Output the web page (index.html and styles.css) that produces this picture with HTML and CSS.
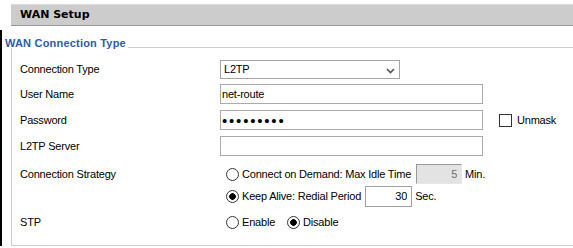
FILE: index.html
```html
<!DOCTYPE html>
<html lang="en">
<head>
    <meta charset="UTF-8">
    <title>WAN Setup</title>
    <link rel="stylesheet" href="styles.css">
</head>
<body>
    <div class="page-title">WAN Setup</div>
    <div class="frame">
        <div class="group">
            <div class="group-title"><span>WAN Connection Type</span></div>
            <div class="group-body">
                <div class="row row-first">
                    <label class="field-label" for="conn-type">Connection Type</label>
                    <div class="select-wrap">
                        <select class="select" id="conn-type">
                            <option>L2TP</option>
                        </select>
                        <svg class="chevron" width="9" height="6" viewBox="0 0 9 6">
                            <path d="M1 1 L4.5 4.5 L8 1" fill="none" stroke="#555" stroke-width="1.7"/>
                        </svg>
                    </div>
                </div>
                <div class="row">
                    <label class="field-label" for="user">User Name</label>
                    <input class="text-input" type="text" id="user" value="net-route">
                </div>
                <div class="row">
                    <label class="field-label" for="pass">Password</label>
                    <input class="text-input password" type="password" id="pass" value="123456789">
                    <label class="check">
                        <input class="checkbox" type="checkbox">
                        <span>Unmask</span>
                    </label>
                </div>
                <div class="row">
                    <label class="field-label" for="server">L2TP Server</label>
                    <input class="text-input" type="text" id="server" autofocus>
                </div>
                <div class="row row-strategy">
                    <div class="field-label">Connection Strategy</div>
                    <div class="options">
                        <label class="option">
                            <input class="radio" type="radio" name="strategy">
                            <span>Connect on Demand: Max Idle Time</span>
                            <input class="num-input idle" type="text" value="5" disabled>
                            <span class="unit">Min.</span>
                        </label>
                        <label class="option">
                            <input class="radio" type="radio" name="strategy" checked>
                            <span>Keep Alive: Redial Period</span>
                            <input class="num-input redial" type="text" value="30">
                            <span class="unit">Sec.</span>
                        </label>
                    </div>
                </div>
                <div class="row row-stp">
                    <div class="field-label">STP</div>
                    <label class="option">
                        <input class="radio" type="radio" name="stp">
                        <span>Enable</span>
                    </label>
                    <label class="option option-next">
                        <input class="radio" type="radio" name="stp" checked>
                        <span>Disable</span>
                    </label>
                </div>
            </div>
        </div>
    </div>
</body>
</html>
```

FILE: styles.css
```css
body {
    margin: 0;
    background-color: #fff;
    color: #000;
    font-family: "Liberation Sans", Arial, sans-serif;
    font-size: 11px;
    letter-spacing: -0.2px;
}
.page-title {
    margin: 4px 0 0 11px;
    padding-left: 9px;
    height: 20px;
    line-height: 20px;
    background-color: #ccc;
    border-top: 1px solid #dcdcdc;
    border-bottom: 1px solid #999;
    font-family: "DejaVu Sans", Verdana, sans-serif;
    font-weight: bold;
    font-size: 11px;
    letter-spacing: 0;
}
.frame {
    margin-top: 4px;
    padding-left: 3px;
    border-left: 2px solid #000;
}
.group-title {
    display: flex;
    padding-top: 7px;
    height: 11px;
    color: #2f5ba8;
    font-weight: bold;
    letter-spacing: 0.2px;
    line-height: 13px;
}
.group-title::after {
    content: "";
    flex: 1;
    height: 10px;
    margin-left: 2px;
    border-bottom: 1px solid #ccc;
}
.group-body {
    margin-left: 6px;
    padding: 9px 0 8px 8px;
    border-left: 1px solid #ccc;
    border-bottom: 1px solid #ccc;
}
.row {
    display: flex;
    align-items: center;
    height: 26px;
}
.row-first {
    height: 24px;
}
.row-strategy {
    align-items: flex-start;
    height: auto;
    padding-top: 4px;
}
.row-stp {
    height: 30px;
}
.field-label {
    width: 200px;
    flex: none;
    line-height: 22px;
}
.select-wrap {
    position: relative;
    width: 180px;
}
.select {
    -webkit-appearance: none;
    appearance: none;
    display: block;
    box-sizing: border-box;
    width: 180px;
    height: 19px;
    margin: 0;
    padding: 0 0 0 3px;
    border: 1px solid #a5a5a5;
    border-radius: 0;
    background-color: #fff;
    color: #000;
    font: inherit;
    letter-spacing: inherit;
}
.chevron {
    position: absolute;
    right: 5px;
    top: 8px;
    pointer-events: none;
}
.text-input {
    box-sizing: border-box;
    width: 263px;
    height: 20px;
    margin: 0;
    padding: 0 0 0 1px;
    border: 1px solid #ababab;
    font: inherit;
    letter-spacing: inherit;
    color: #000;
}
.text-input:focus {
    outline: none;
    caret-color: #000;
}
.password {
    font-size: 15px;
    letter-spacing: 1.8px;
}
.check {
    display: flex;
    align-items: center;
    margin-left: 16px;
}
.checkbox {
    -webkit-appearance: none;
    appearance: none;
    width: 13px;
    height: 13px;
    margin: 0 5px 0 0;
    border: 1px solid #333;
    background-color: #fff;
}
.options {
    display: flex;
    flex-direction: column;
}
.option {
    display: flex;
    align-items: center;
    height: 22px;
}
.option-next {
    margin-left: 12px;
}
.radio {
    -webkit-appearance: none;
    appearance: none;
    box-sizing: border-box;
    width: 13px;
    height: 13px;
    margin: 0 3px 0 6px;
    border: 1px solid #333;
    border-radius: 50%;
    background-color: #fff;
}
.radio:checked {
    background: radial-gradient(circle, #000 0, #000 3px, #fff 3.6px);
}
.option-next .radio {
    margin-left: 0;
}
.num-input {
    box-sizing: border-box;
    margin: 0;
    padding: 0 4px 0 0;
    text-align: right;
    font: inherit;
    letter-spacing: inherit;
}
.idle {
    width: 46px;
    height: 20px;
    margin-left: 5px;
    border: 1px solid;
    border-color: #999 #e6e6e6 #e6e6e6 #999;
    background-color: #e3e3e3;
    color: #6d6d6d;
}
.redial {
    width: 47px;
    height: 21px;
    margin-left: 4px;
    border: 1px solid #a0a0a0;
    background-color: #fff;
    color: #000;
}
.unit {
    margin-left: 3px;
}
```
